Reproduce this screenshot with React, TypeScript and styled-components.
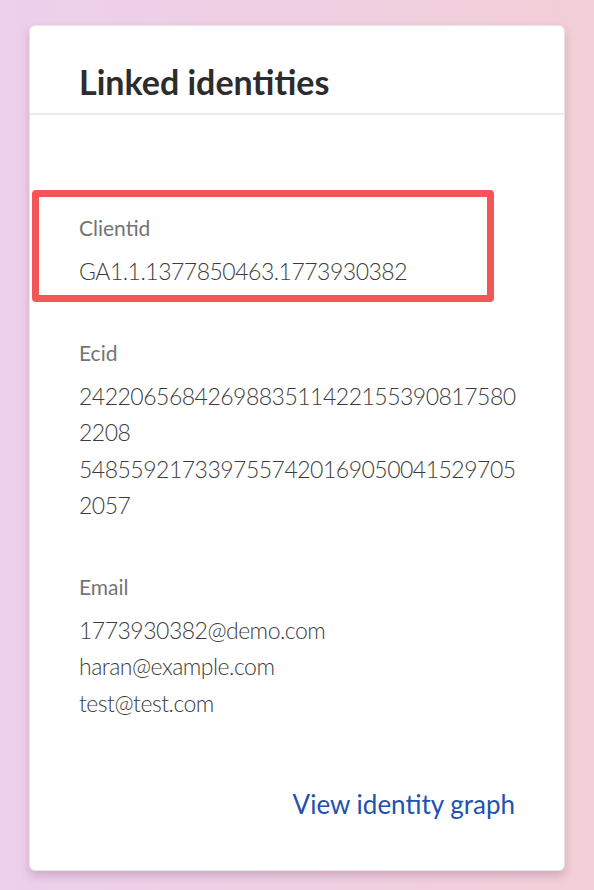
import React from "react";
import styled, { createGlobalStyle } from "styled-components";

const GlobalStyle = createGlobalStyle`
  html, body {
    margin: 0;
    padding: 0;
  }
  body {
    font-family: Lato, "Open Sans", "Liberation Sans", sans-serif;
    background: linear-gradient(90deg, #ecd0ec 0%, #efcfe1 55%, #f3cfd7 100%);
    min-height: 890px;
  }
`;

interface iIdentity {
  label: string;
  values: string[];
  highlight?: boolean;
}

const identities: iIdentity[] = [
  { label: "Clientid", values: ["GA1.1.1377850463.1773930382"], highlight: true },
  {
    label: "Ecid",
    values: [
      "24220656842698835114221553908175802208",
      "54855921733975574201690500415297052057",
    ],
  },
  {
    label: "Email",
    values: ["1773930382@demo.com", "haran@example.com", "test@test.com"],
  },
];

function App() {
  return (
    <Page>
      <GlobalStyle />
      <Card>
        <Header>
          <Title>Linked identities</Title>
        </Header>
        <Body>
          {identities.map((item) => (
            <Section key={item.label} highlight={item.highlight}>
              <Label>{item.label}</Label>
              {item.values.map((v) => (
                <Value key={v}>{v}</Value>
              ))}
            </Section>
          ))}
          <Footer>
            <Link href="#">View identity graph</Link>
          </Footer>
        </Body>
      </Card>
    </Page>
  );
}

export default App;

const Page = styled.div`
  width: 594px;
  height: 890px;
  padding: 25px 0 0 29px;
  box-sizing: border-box;
`;

const Card = styled.div`
  width: 536px;
  height: 846px;
  box-sizing: border-box;
  background-color: #ffffff;
  border: 1px solid #e6e4e6;
  border-radius: 6px;
  box-shadow: rgba(90, 40, 80, 0.22) 0px 5px 10px;
  display: flex;
  flex-direction: column;
`;

const Header = styled.div`
  height: 89px;
  box-sizing: border-box;
  border-bottom: 2px solid #ebebeb;
  padding: 36px 49px 0;
`;

const Title = styled.h2`
  margin: 0;
  font-size: 34px;
  line-height: 40px;
  font-weight: 700;
  color: #2c2c2c;
`;

const Body = styled.div`
  padding: 101px 47px 0 49px;
  display: flex;
  flex-direction: column;
  gap: 51px;
`;

const Section = styled.div<{ highlight?: boolean }>`
  position: relative;
  display: flex;
  flex-direction: column;

  &::before {
    content: "";
    display: ${(p) => (p.highlight ? "block" : "none")};
    position: absolute;
    left: -47px;
    top: -26px;
    width: 462px;
    height: 112px;
    box-sizing: border-box;
    border: 7px solid #f25657;
    border-radius: 4px;
  }
`;

const Label = styled.div`
  font-size: 21px;
  line-height: 24px;
  color: #747474;
  margin-bottom: 13px;
`;

const Value = styled.div`
  font-size: 23px;
  line-height: 36.5px;
  letter-spacing: -0.5px;
  color: #3c3c3c;
  word-break: break-all;
  font-weight: 300;
`;

const Footer = styled.div`
  display: flex;
  justify-content: flex-end;
  margin-top: 17px;
  padding-right: 2px;
`;

const Link = styled.a`
  font-size: 26px;
  line-height: 30px;
  color: #1f52ad;
  text-decoration: none;
`;
